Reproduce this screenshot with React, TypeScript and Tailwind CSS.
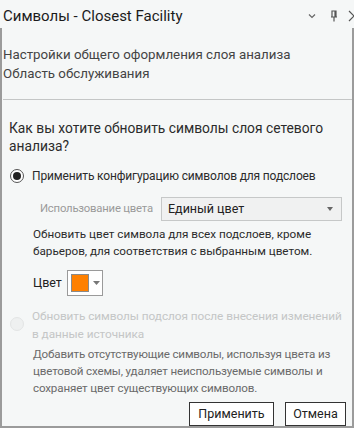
import React from "react";

function Radio({ checked, disabled }: { checked?: boolean; disabled?: boolean }) {
  return (
    <div
      className={
        "w-[14px] h-[14px] rounded-full border flex items-center justify-center shrink-0 " +
        (disabled ? "border-[#e3e5e5] bg-[#eef0f0]" : "border-[#555] bg-white")
      }
    >
      {checked && <div className="w-[8px] h-[8px] rounded-full bg-[#222]" />}
    </div>
  );
}

export default function App() {
  return (
    <div
      className="w-[354px] h-[428px] bg-[#f5f7f7] flex flex-col overflow-hidden whitespace-nowrap"
      style={{ fontFamily: 'Roboto, "Noto Sans", sans-serif' }}
    >
      {/* title bar */}
      <div className="h-[28px] flex items-center pl-[3px] shrink-0">
        <span className="text-[15px] text-[#1b1b1b] mt-[4px]">Символы - Closest Facility</span>
        <div className="ml-auto flex items-center gap-[9px] mt-[4px] mr-[-6px]">
          <svg width="10" height="10" viewBox="0 0 10 10" className="mr-[3px]">
            <path d="M2 3.5 L5 6.5 L8 3.5" fill="none" stroke="#666" strokeWidth="1.2" />
          </svg>
          <svg width="10" height="12" viewBox="0 0 10 12">
            <path d="M3 1 H7 V7 H3 Z M2 7 H8 M5 7 V11.5 M6 1 V7" fill="none" stroke="#555" strokeWidth="1.2" />
          </svg>
          <svg width="12" height="12" viewBox="0 0 12 12">
            <path d="M1 1 L11 11 M11 1 L1 11" fill="none" stroke="#555" strokeWidth="1.2" />
          </svg>
        </div>
      </div>

      {/* body */}
      <div className="flex-1 border-l-2 border-r-2 border-b-2 border-[#9b9b9b] flex flex-col">
        <div className="pl-[1px] pt-[17px] text-[13.3px] leading-[19px] text-[#444]">
          <div>Настройки общего оформления слоя анализа</div>
          <div>Область обслуживания</div>
        </div>
        <div className="mt-[16px] ml-[1px] h-[1px] bg-[#c4c6c6]" />

        <div className="pl-[7px] mt-[19px] text-[13.8px] leading-[18px] text-[#2b2b2b]">
          <div>Как вы хотите обновить символы слоя сетевого</div>
          <div>анализа?</div>
        </div>

        <div className="flex items-center gap-[8px] pl-[8px] mt-[12px] h-[18px]">
          <Radio checked />
          <span className="text-[12px] tracking-[-0.15px] text-[#2b2b2b]">Применить конфигурацию символов для подслоев</span>
        </div>

        <div className="flex items-center pl-[38px] pr-[10px] mt-[12px]">
          <span className="text-[11.3px] tracking-[-0.2px] text-[#9a9a9a] w-[121px] shrink-0">Использование цвета</span>
          <div className="flex-1 h-[24px] border border-[#c6c8c8] bg-[#f0f1f1] flex items-center pl-[6px] pr-[8px]">
            <span className="text-[12.5px] text-[#222]">Единый цвет</span>
            <svg width="6" height="4" viewBox="0 0 6 4" className="ml-auto">
              <path d="M0 0 H6 L3 4 Z" fill="#666" />
            </svg>
          </div>
        </div>

        <div className="pl-[31px] mt-[5px] text-[11.7px] leading-[17px] text-[#2b2b2b]">
          <div>Обновить цвет символа для всех подслоев, кроме</div>
          <div>барьеров, для соответствия с выбранным цветом.</div>
        </div>

        <div className="flex items-center pl-[31px] mt-[10px]">
          <span className="text-[12.5px] text-[#222] w-[34px]">Цвет</span>
          <div className="w-[36px] h-[26px] border border-[#9a9a9a] bg-white flex items-center pl-[3px]">
            <div className="w-[18px] h-[18px] bg-[#ff8000] border border-[#8a8a8a]" />
            <svg width="7" height="4" viewBox="0 0 7 4" className="ml-[4px]">
              <path d="M0 0 H7 L3.5 4 Z" fill="#777" />
            </svg>
          </div>
        </div>

        <div className="flex pl-[8px] mt-[11px]">
          <div className="mt-[10px]">
            <Radio disabled />
          </div>
          <div className="ml-[8px] text-[11.8px] tracking-[-0.05px] leading-[18px] text-[#c4c6c6]">
            <div>Обновить символы подслоя после внесения изменений</div>
            <div>в данные источника</div>
          </div>
        </div>

        <div className="pl-[31px] mt-[3px] text-[11.6px] tracking-[-0.15px] leading-[17px] text-[#6a6a6a]">
          <div>Добавить отсутствующие символы, используя цвета из</div>
          <div>цветовой схемы, удаляет неиспользуемые символы и</div>
          <div>сохраняет цвет существующих символов.</div>
        </div>

        <div className="flex justify-end gap-[11px] pr-[6px] mt-[5px]">
          <button className="w-[85px] h-[24px] bg-white border border-[#333] text-[12.5px] text-[#222]">Применить</button>
          <button className="w-[61px] h-[24px] bg-white border border-[#333] text-[12.5px] text-[#222]">Отмена</button>
        </div>
      </div>
    </div>
  );
}
